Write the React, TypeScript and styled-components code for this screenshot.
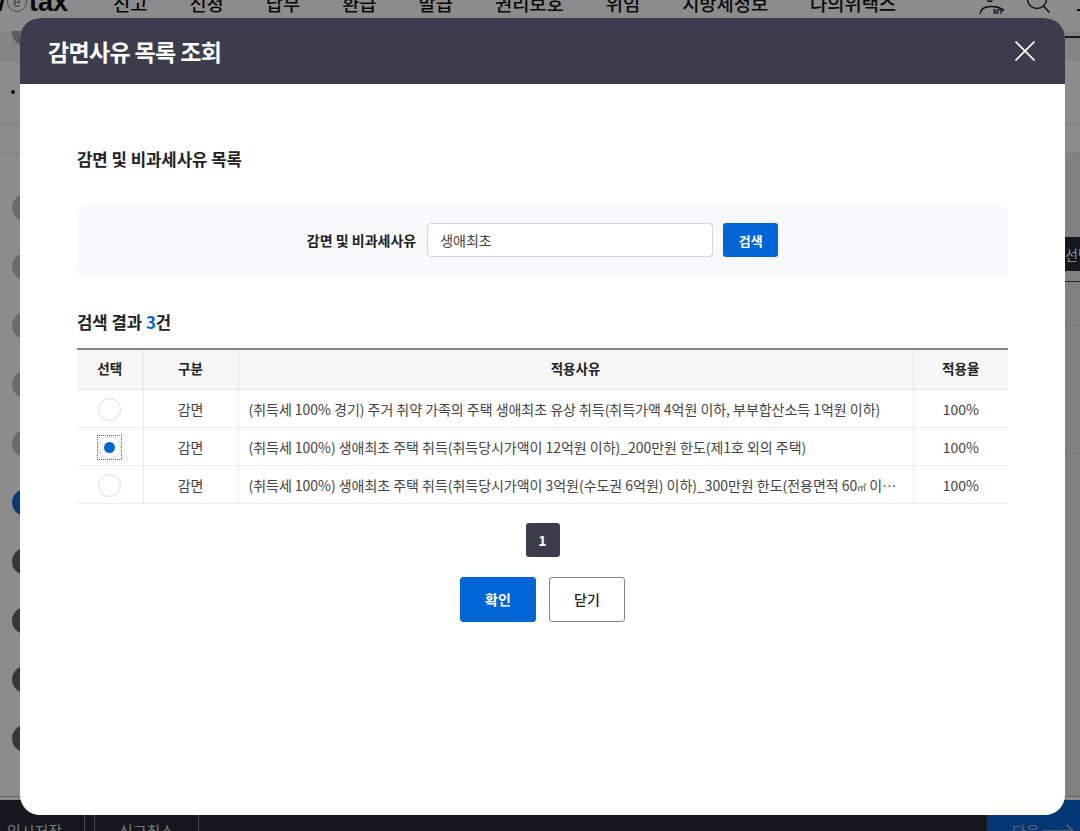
import React, { useState } from 'react';
import styled, { createGlobalStyle } from 'styled-components';

const GlobalStyle = createGlobalStyle`
  * { box-sizing: border-box; }
  html, body { margin: 0; padding: 0; height: 100%; }
  body {
    font-family: "Noto Sans CJK KR", "Noto Sans", "Liberation Sans", sans-serif;
    color: #222;
    background: #fff;
    overflow: hidden;
  }
`;

const Page = styled.div`
  height: 100vh;
  display: flex;
  flex-direction: column;
  overflow: hidden;
`;

const TopNav = styled.nav`
  height: 36px;
  margin: -16px 0 11px;
  flex: none;
  display: flex;
  align-items: center;
`;

const Logo = styled.div`
  width: 129px;
  flex: none;
  margin-left: -16px;
  font-family: "Liberation Sans", sans-serif;
  font-size: 27px;
  font-weight: 700;
  color: #111;
  display: flex;
  align-items: center;
`;

const LogoMark = styled.span`
  width: 20px;
  height: 20px;
  margin: 0 2px;
  border: 1.5px solid #888;
  border-radius: 50%;
  color: #777;
  font-size: 14px;
  font-weight: 400;
  display: inline-flex;
  align-items: center;
  justify-content: center;
`;

const NavItem = styled.span`
  margin-right: 42px;
  font-size: 18.7px;
  font-weight: 500;
  color: #111;
  white-space: nowrap;
`;

const NavTools = styled.div`
  position: absolute;
  top: 0;
  left: 978px;
  height: 20px;
  display: flex;
  gap: 16px;
`;

const UserTool = styled.div`
  position: relative;
  width: 30px;
  height: 20px;
`;

const MyTag = styled.span`
  position: absolute;
  left: 15px;
  top: 8px;
  font-family: "Liberation Sans", sans-serif;
  font-size: 7px;
  line-height: 8px;
  font-weight: 700;
  color: #111;
`;

const ToolDash = styled.span`
  width: 3px;
  height: 2px;
  margin: 9px 0 0 9px;
  background: #111;
`;

const TopBand = styled.div`
  height: 30px;
  flex: none;
  padding-left: 12px;
  background: #f1f1f1;
  position: relative;
`;

const BandDot = styled.span`
  display: block;
  width: 27px;
  height: 15px;
  border-radius: 0 0 14px 14px;
  background: #a8a8a8;
`;

const BandRule = styled.span`
  position: absolute;
  top: 5px;
  right: 0;
  width: 15px;
  height: 2px;
  background: #333;
`;

const InfoRow = styled.div`
  height: 63px;
  flex: none;
  padding-left: 11px;
  display: flex;
  align-items: center;
  border-bottom: 1px solid #e2e2e2;
  font-size: 14px;
`;

const InfoBullet = styled.span`
  width: 4px;
  height: 4px;
  border-radius: 50%;
  background: #222;
`;

const SubRow = styled.div`
  height: 30px;
  flex: none;
  border-bottom: 1px solid #e2e2e2;
`;

const Main = styled.div`
  flex: 1;
  min-height: 0;
  display: flex;
`;

const StepList = styled.ol`
  flex: 1;
  margin: 0;
  padding: 40px 0 0 12px;
  list-style: none;
  display: flex;
  flex-direction: column;
  gap: 32px;
`;

const StepDot = styled.li<{ $state: 'done' | 'current' | 'todo' }>`
  width: 27px;
  height: 27px;
  flex: none;
  border-radius: 50%;
  background: ${p => (p.$state === 'done' ? '#c2c2c2' : p.$state === 'current' ? '#0f66d9' : '#636363')};
`;

const RightRail = styled.aside`
  width: 15px;
  flex: none;
  padding-top: 83px;
  background: #ebebeb;
  overflow: hidden;
`;

const RailButton = styled.div`
  width: 40px;
  height: 34px;
  background: #282a38;
  color: #fff;
  font-size: 14px;
  line-height: 34px;
  white-space: nowrap;
`;

const RailLine = styled.div<{ $gap: number; $dark?: boolean }>`
  margin-top: ${p => p.$gap}px;
  height: 1px;
  background: ${p => (p.$dark ? '#444' : '#d6d6d6')};
`;

const BottomBar = styled.footer`
  height: 35px;
  flex: none;
  display: flex;
  border-top: 1px solid #b8b8b8;
  margin-top: -3px;
  background: #fff;
`;

const BottomInner = styled.div`
  flex: 1;
  margin-top: 3px;
  display: flex;
  background: #282a38;
  overflow: hidden;
`;

const BottomButton = styled.div<{ $width: number; $inset?: number }>`
  width: ${p => p.$width}px;
  flex: none;
  border-right: 1px solid #888;
  color: #ddd;
  font-size: 15px;
  line-height: 16px;
  padding: 23px ${p => p.$inset ?? 0}px 0 0;
  text-align: center;
  white-space: nowrap;
`;

const NextButton = styled.div`
  margin-left: auto;
  width: 93px;
  background: #0666d8;
  color: #bbb;
  font-size: 15px;
  line-height: 16px;
  padding: 23px 0 0 25px;
  display: flex;
  gap: 3px;
  white-space: nowrap;
`;

const Scrim = styled.div`
  position: fixed;
  inset: 0;
  background: rgba(0, 0, 0, 0.45);
`;

const Modal = styled.div`
  position: fixed;
  left: 20px;
  top: 18px;
  width: 1045px;
  height: 797px;
  border-radius: 20px;
  overflow: hidden;
  background: #fff;
`;

const ModalHeader = styled.header`
  height: 66px;
  padding: 0 30px 0 28px;
  background: #3b3c4c;
  display: flex;
  align-items: center;
  justify-content: space-between;
`;

const ModalTitle = styled.h1`
  margin: 0;
  font-size: 23px;
  font-weight: 700;
  letter-spacing: -0.65px;
  color: #fff;
`;

const CloseButton = styled.button`
  width: 20px;
  height: 20px;
  padding: 0;
  border: 0;
  background: none;
  cursor: pointer;
  display: block;
`;

const ModalBody = styled.div`
  padding: 63px 57px 0;
`;

const SectionTitle = styled.h2`
  margin: 0;
  font-size: 16.7px;
  line-height: 24px;
  font-weight: 700;
  color: #222;
`;

const SearchBox = styled.form`
  margin-top: 34px;
  height: 72px;
  padding-bottom: 2px;
  border-radius: 10px;
  background: #f8f9fa;
  display: flex;
  align-items: center;
  justify-content: center;
`;

const SearchLabel = styled.label`
  margin-right: 11px;
  font-size: 14px;
  font-weight: 700;
  color: #222;
`;

const SearchInput = styled.input`
  width: 286px;
  height: 34px;
  padding: 0 12px;
  border: 1px solid #d4d4d4;
  border-radius: 4px;
  background: #fff;
  font: inherit;
  font-size: 14px;
  color: #444;
  outline: none;
`;

const SearchButton = styled.button`
  width: 55px;
  height: 34px;
  margin-left: 10px;
  border: 0;
  border-radius: 3px;
  background: #0066d6;
  color: #fff;
  font: inherit;
  font-size: 13px;
  font-weight: 700;
`;

const ResultTitle = styled(SectionTitle)`
  margin-top: 33px;
`;

const ResultCount = styled.em`
  font-style: normal;
  color: #0066d6;
`;

const Table = styled.table`
  margin-top: 14px;
  width: 100%;
  table-layout: fixed;
  border-collapse: collapse;
  border-top: 2px solid #888;
`;

const HeadCell = styled.th<{ $width?: number }>`
  width: ${p => (p.$width ? `${p.$width}px` : 'auto')};
  height: 40px;
  padding: 0 0 2px;
  background: #f7f7f7;
  border-bottom: 1px solid #e6e6e6;
  border-left: 1px solid #e9e9e9;
  font-size: 13.5px;
  font-weight: 700;
  color: #222;
  &:first-child { border-left: 0; }
`;

const Cell = styled.td<{ $left?: boolean }>`
  height: 38px;
  padding: ${p => (p.$left ? '2px 11px 0 10px' : '2px 0 0')};
  border-bottom: 1px solid #ececec;
  border-left: 1px solid #ececec;
  font-size: 14px;
  letter-spacing: -0.03px;
  color: #444;
  text-align: ${p => (p.$left ? 'left' : 'center')};
  white-space: nowrap;
  overflow: hidden;
  text-overflow: ellipsis;
  &:first-child { border-left: 0; }
`;

const AreaUnit = styled.span`
  font-size: 9px;
`;

const RadioFrame = styled.label<{ $focused: boolean }>`
  width: 25px;
  height: 25px;
  margin: 0 auto;
  display: flex;
  align-items: center;
  justify-content: center;
  border: 1px dotted ${p => (p.$focused ? '#2b5fd9' : 'transparent')};
`;

const Radio = styled.input`
  appearance: none;
  width: 23px;
  height: 23px;
  margin: 0;
  flex: none;
  border: 1px solid #ddd;
  border-radius: 50%;
  background: #fff;
  outline: none;
  display: grid;
  place-items: center;
  &:checked::after {
    content: '';
    width: 11px;
    height: 11px;
    border-radius: 50%;
    background: #0066d6;
  }
`;

const Pager = styled.div`
  margin-top: 19px;
  display: flex;
  justify-content: center;
`;

const PageButton = styled.button`
  width: 34px;
  height: 34px;
  padding: 0;
  border: 0;
  border-radius: 3px;
  background: #3b3c4c;
  color: #fff;
  font: inherit;
  font-size: 14px;
  font-weight: 700;
`;

const Actions = styled.div`
  margin-top: 20px;
  display: flex;
  justify-content: center;
  gap: 13px;
`;

const ActionButton = styled.button<{ $primary?: boolean }>`
  width: 76px;
  height: 45px;
  padding: 0;
  border: 1px solid ${p => (p.$primary ? '#0066d6' : '#888')};
  border-radius: 3px;
  background: ${p => (p.$primary ? '#0066d6' : '#fff')};
  color: ${p => (p.$primary ? '#fff' : '#222')};
  font: inherit;
  font-size: 14px;
  font-weight: ${p => (p.$primary ? 700 : 500)};
`;

const navItems = ['신고', '신청', '납부', '환급', '발급', '권리보호', '위임', '지방세정보', '나의위택스'];

const steps: ('done' | 'current' | 'todo')[] = [
  'done', 'done', 'done', 'done', 'done', 'current', 'todo', 'todo', 'todo', 'todo',
];

const rows: React.ReactNode[] = [
  '(취득세 100% 경기) 주거 취약 가족의 주택 생애최초 유상 취득(취득가액 4억원 이하, 부부합산소득 1억원 이하)',
  '(취득세 100%) 생애최초 주택 취득(취득당시가액이 12억원 이하)_200만원 한도(제1호 외의 주택)',
  <>
    (취득세 100%) 생애최초 주택 취득(취득당시가액이 3억원(수도권 6억원) 이하)_300만원 한도(전용면적 60
    <AreaUnit>㎡</AreaUnit> 이하 주택)
  </>,
];

const App: React.FC = () => {
  const [selected, setSelected] = useState(1);

  return (
    <>
      <GlobalStyle />
      <Page>
        <TopNav>
          <Logo>
            w<LogoMark>e</LogoMark>tax
          </Logo>
          {navItems.map(item => (
            <NavItem key={item}>{item}</NavItem>
          ))}
          <NavTools>
            <UserTool>
              <svg width="30" height="20" viewBox="0 0 30 20" fill="none" stroke="#111" strokeWidth="1.4">
                <path d="M2 14C2.5 9 6 6.5 13 6.5c5 0 10 1.5 13 4" />
                <path d="M9 0.5c1.5 1 4 1 5.5 0" />
              </svg>
              <MyTag>MY</MyTag>
            </UserTool>
            <svg width="28" height="20" viewBox="0 0 28 20" fill="none" stroke="#111" strokeWidth="1.4">
              <circle cx="13" cy="-1" r="9.5" />
              <path d="M19.5 6l6 6.5" />
            </svg>
            <ToolDash />
          </NavTools>
        </TopNav>
        <TopBand>
          <BandDot />
          <BandRule />
        </TopBand>
        <InfoRow>
          <InfoBullet />
        </InfoRow>
        <SubRow />
        <Main>
          <StepList>
            {steps.map((state, i) => (
              <StepDot key={i} $state={state} />
            ))}
          </StepList>
          <RightRail>
            <RailButton>선택</RailButton>
            <RailLine $gap={10} $dark />
            <RailLine $gap={43} />
            <RailLine $gap={127} />
          </RightRail>
        </Main>
        <BottomBar>
          <BottomInner>
            <BottomButton $width={85} $inset={15}>임시저장</BottomButton>
            <BottomButton $width={10} />
            <BottomButton $width={104}>신고취소</BottomButton>
            <NextButton>
              다음
              <svg width="32" height="14" viewBox="0 0 32 14" fill="none" stroke="#bbb" strokeWidth="1.5">
                <path d="M0 8h30M24 2l6 6" />
              </svg>
            </NextButton>
          </BottomInner>
        </BottomBar>
      </Page>
      <Scrim />
      <Modal>
        <ModalHeader>
          <ModalTitle>감면사유 목록 조회</ModalTitle>
          <CloseButton aria-label="닫기">
            <svg width="20" height="20" viewBox="0 0 20 20" fill="none" stroke="#fff" strokeWidth="1.7">
              <path d="M0.5 0.5l19 19M19.5 0.5l-19 19" />
            </svg>
          </CloseButton>
        </ModalHeader>
        <ModalBody>
          <SectionTitle>감면 및 비과세사유 목록</SectionTitle>
          <SearchBox onSubmit={e => e.preventDefault()}>
            <SearchLabel htmlFor="reason">감면 및 비과세사유</SearchLabel>
            <SearchInput id="reason" defaultValue="생애최초" />
            <SearchButton type="submit">검색</SearchButton>
          </SearchBox>
          <ResultTitle>
            검색 결과 <ResultCount>3</ResultCount>건
          </ResultTitle>
          <Table>
            <thead>
              <tr>
                <HeadCell $width={66}>선택</HeadCell>
                <HeadCell $width={95}>구분</HeadCell>
                <HeadCell>적용사유</HeadCell>
                <HeadCell $width={95}>적용율</HeadCell>
              </tr>
            </thead>
            <tbody>
              {rows.map((text, i) => (
                <tr key={i}>
                  <Cell>
                    <RadioFrame $focused={selected === i}>
                      <Radio
                        type="radio"
                        name="reason"
                        checked={selected === i}
                        onChange={() => setSelected(i)}
                      />
                    </RadioFrame>
                  </Cell>
                  <Cell>감면</Cell>
                  <Cell $left>{text}</Cell>
                  <Cell>100%</Cell>
                </tr>
              ))}
            </tbody>
          </Table>
          <Pager>
            <PageButton>1</PageButton>
          </Pager>
          <Actions>
            <ActionButton $primary>확인</ActionButton>
            <ActionButton>닫기</ActionButton>
          </Actions>
        </ModalBody>
      </Modal>
    </>
  );
};

export default App;
